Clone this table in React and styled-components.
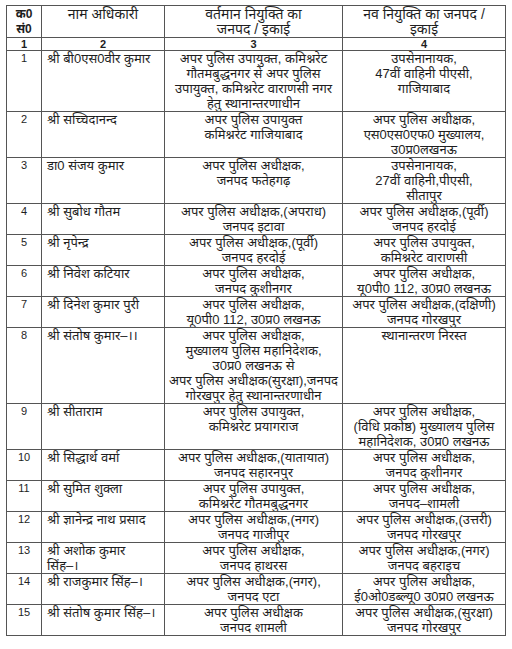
import React from 'react';
import styled, { createGlobalStyle } from 'styled-components';

const GlobalStyle = createGlobalStyle`
  html, body {
    margin: 0;
    padding: 0;
    background: #fff;
  }
  body {
    font-family: "Liberation Sans", "Noto Sans", "DejaVu Sans", sans-serif;
    color: #1e1e1e;
  }
`;

const rows = [
  ['1', ['श्री बी0एस0वीर कुमार'], ['अपर पुलिस उपायुक्त, कमिश्नरेट', 'गौतमबुद्धनगर से अपर पुलिस', 'उपायुक्त, कमिश्नरेट वाराणसी नगर', 'हेतु स्थानान्तरणाधीन'], ['उपसेनानायक,', '47वीं वाहिनी पीएसी,', 'गाजियाबाद']],
  ['2', ['श्री सच्चिदानन्द'], ['अपर पुलिस उपायुक्त', 'कमिश्नरेट गाजियाबाद'], ['अपर पुलिस अधीक्षक,', 'एस0एस0एफ0 मुख्यालय,', 'उ0प्र0लखनऊ']],
  ['3', ['डा0 संजय कुमार'], ['अपर पुलिस अधीक्षक,', 'जनपद फतेहगढ़'], ['उपसेनानायक,', '27वीं वाहिनी,पीएसी,', 'सीतापुर']],
  ['4', ['श्री सुबोध गौतम'], ['अपर पुलिस अधीक्षक,(अपराध)', 'जनपद इटावा'], ['अपर पुलिस अधीक्षक,(पूर्वी)', 'जनपद हरदोई']],
  ['5', ['श्री नृपेन्द्र'], ['अपर पुलिस अधीक्षक,(पूर्वी)', 'जनपद हरदोई'], ['अपर पुलिस उपायुक्त,', 'कमिश्नरेट वाराणसी']],
  ['6', ['श्री निवेश कटियार'], ['अपर पुलिस अधीक्षक,', 'जनपद कुशीनगर'], ['अपर पुलिस अधीक्षक,', 'यू0पी0 112, उ0प्र0 लखनऊ']],
  ['7', ['श्री दिनेश कुमार पुरी'], ['अपर पुलिस अधीक्षक,', 'यू0पी0 112, उ0प्र0 लखनऊ'], ['अपर पुलिस अधीक्षक,(दक्षिणी)', 'जनपद गोरखपुर']],
  ['8', ['श्री संतोष कुमार–।।'], ['अपर पुलिस अधीक्षक,', 'मुख्यालय पुलिस महानिदेशक,', 'उ0प्र0 लखनऊ से', 'अपर पुलिस अधीक्षक(सुरक्षा),जनपद', 'गोरखपुर हेतु स्थानान्तरणाधीन'], ['स्थानान्तरण निरस्त']],
  ['9', ['श्री सीताराम'], ['अपर पुलिस उपायुक्त,', 'कमिश्नरेट प्रयागराज'], ['अपर पुलिस अधीक्षक,', '(विधि प्रकोष्ठ) मुख्यालय पुलिस', 'महानिदेशक, उ0प्र0 लखनऊ']],
  ['10', ['श्री सिद्धार्थ वर्मा'], ['अपर पुलिस अधीक्षक,(यातायात)', 'जनपद सहारनपुर'], ['अपर पुलिस अधीक्षक,', 'जनपद कुशीनगर']],
  ['11', ['श्री सुमित शुक्ला'], ['अपर पुलिस उपायुक्त,', 'कमिश्नरेट गौतमबुद्धनगर'], ['अपर पुलिस अधीक्षक,', 'जनपद–शामली']],
  ['12', ['श्री ज्ञानेन्द्र नाथ प्रसाद'], ['अपर पुलिस अधीक्षक,(नगर)', 'जनपद गाजीपुर'], ['अपर पुलिस अधीक्षक,(उत्तरी)', 'जनपद गोरखपुर']],
  ['13', ['श्री अशोक कुमार', 'सिंह–।'], ['अपर पुलिस अधीक्षक,', 'जनपद हाथरस'], ['अपर पुलिस अधीक्षक,(नगर)', 'जनपद बहराइच']],
  ['14', ['श्री राजकुमार सिंह–।'], ['अपर पुलिस अधीक्षक,(नगर),', 'जनपद एटा'], ['अपर पुलिस अधीक्षक,', 'ई0ओ0डब्ल्यू0 उ0प्र0 लखनऊ']],
  ['15', ['श्री संतोष कुमार सिंह–।'], ['अपर पुलिस अधीक्षक', 'जनपद शामली'], ['अपर पुलिस अधीक्षक,(सुरक्षा)', 'जनपद गोरखपुर']],
];

const Lines = ({ items }) =>
  items.map((t, i) => <Line key={i}>{t}</Line>);

export default function App() {
  return (
    <Page>
      <GlobalStyle />
      <Table>
        <colgroup>
          <col style={{ width: 35 }} />
          <col style={{ width: 123 }} />
          <col style={{ width: 178 }} />
          <col style={{ width: 163 }} />
        </colgroup>
        <thead>
          <tr>
            <HeadCell $bold>
              <HeadLine>क0</HeadLine>
              <HeadLine>सं0</HeadLine>
            </HeadCell>
            <HeadCell>
              <HeadLine>नाम अधिकारी</HeadLine>
            </HeadCell>
            <HeadCell>
              <HeadLine>वर्तमान नियुक्ति का</HeadLine>
              <HeadLine>जनपद / इकाई</HeadLine>
            </HeadCell>
            <HeadCell>
              <HeadLine>नव नियुक्ति का जनपद /</HeadLine>
              <HeadLine>इकाई</HeadLine>
            </HeadCell>
          </tr>
          <tr>
            <NumCell>1</NumCell>
            <NumCell>2</NumCell>
            <NumCell>3</NumCell>
            <NumCell>4</NumCell>
          </tr>
        </thead>
        <tbody>
          {rows.map(([no, name, from, to]) => (
            <tr key={no}>
              <Cell $align="center"><SerialNo>{no}</SerialNo></Cell>
              <Cell $align="left"><Lines items={name} /></Cell>
              <Cell $align="center"><Lines items={from} /></Cell>
              <Cell $align="center"><Lines items={to} /></Cell>
            </tr>
          ))}
        </tbody>
      </Table>
    </Page>
  );
}

const Page = styled.div`
  width: 512px;
  height: 649px;
  padding: 5px 0 0 6px;
  box-sizing: border-box;
  background: #fff;
`;

const Table = styled.table`
  border-collapse: collapse;
  table-layout: fixed;
  width: 499px;
  border: 1px solid #4a4a4a;
  font-size: 13px;
`;

const HeadCell = styled.th`
  border: 1px solid #555;
  padding: 1px 3px 0;
  vertical-align: top;
  text-align: center;
  font-weight: ${(p) => (p.$bold ? 'bold' : 'normal')};
  font-size: ${(p) => (p.$bold ? '12px' : '14px')};
`;

const HeadLine = styled.div`
  height: 15px;
  line-height: 15px;
  white-space: nowrap;
`;

const NumCell = styled.th`
  border: 1px solid #555;
  padding: 0;
  height: 12px;
  line-height: 12px;
  font-size: 11px;
  font-weight: bold;
  text-align: center;
`;

const Cell = styled.td`
  border: 1px solid #555;
  padding: 0 3px 0 ${(p) => (p.$align === 'left' ? '5px' : '3px')};
  vertical-align: top;
  text-align: ${(p) => p.$align};
  overflow: hidden;
`;

const Line = styled.div`
  height: 15px;
  line-height: 15px;
  white-space: nowrap;
`;

const SerialNo = styled.div`
  height: 15px;
  line-height: 15px;
  font-size: 11px;
`;
